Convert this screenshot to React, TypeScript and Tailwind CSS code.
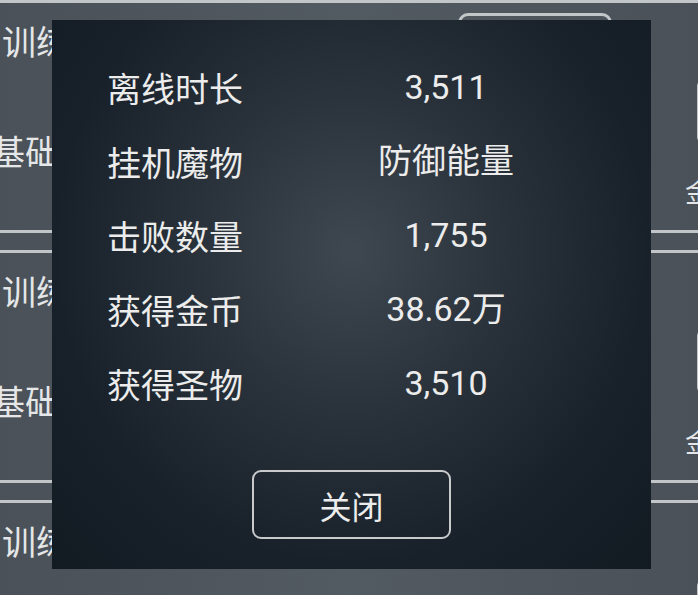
import React from 'react';

const rows: { label: string; value: string }[] = [
    { label: '离线时长', value: '3,511' },
    { label: '挂机魔物', value: '防御能量' },
    { label: '击败数量', value: '1,755' },
    { label: '获得金币', value: '38.62万' },
    { label: '获得圣物', value: '3,510' },
];

const TrainingCard: React.FC = () => {
    return (
        <div className="flex h-[233px] shrink-0 border-y-[3px] border-[#c3c6c9] bg-[linear-gradient(90deg,#4a5158,#525a62_50%,#4a5158)]">
            {/* left titles, cut off by the viewport */}
            <div className="flex w-[120px] shrink-0 flex-col pt-[16px] text-[34px] leading-[44px] text-[#e4e6e8]">
                <span className="ml-[2px] whitespace-nowrap">训练</span>
                <span className="-ml-[9px] mt-[66px] whitespace-nowrap">基础</span>
            </div>
            <div className="ml-[338px] shrink-0 pt-[10px]">
                <div className="h-[48px] w-[154px] rounded-[10px] border-[3px] border-[#c3c6c9]" />
            </div>
            <div className="ml-[73px] flex w-[120px] shrink-0 flex-col">
                <div className="ml-[12px] mt-[77px] h-[63px] w-[60px] rounded-[6px] border-[3px] border-[#c3c6c9]" />
                <span className="mt-[30px] whitespace-nowrap text-[28px] leading-[36px] text-[#e4e6e8]">金币</span>
            </div>
        </div>
    );
};

export default function App() {
    return (
        <div className="relative h-[595px] w-[698px] overflow-hidden bg-[#4b5259] font-['Noto_Sans_CJK_SC',sans-serif]">
            <div className="flex flex-col gap-[17px]">
                <TrainingCard />
                <TrainingCard />
                <TrainingCard />
            </div>

            {/* offline reward dialog */}
            <div className="absolute left-[52px] top-[20px] flex h-[549px] w-[599px] flex-col items-center bg-[radial-gradient(ellipse_at_50%_42%,#3f4850_0%,#2a333b_35%,#18212a_70%,#121a22_100%)]">
                <div className="w-full pl-[55px] pt-[30px]">
                    {rows.map((r) => (
                        <div key={r.label} className="grid h-[74px] grid-cols-[239px_200px] items-center text-[34px] text-[#ececec]">
                            <span>{r.label}</span>
                            <span className="text-center font-['Roboto','Noto_Sans_CJK_SC',sans-serif] text-[34px]">{r.value}</span>
                        </div>
                    ))}
                </div>
                <button
                    type="button"
                    className="mt-[50px] h-[69px] w-[199px] rounded-[9px] border-2 border-[#c9cacc] text-[32px] text-[#ececec]"
                >
                    关闭
                </button>
            </div>
        </div>
    );
}
